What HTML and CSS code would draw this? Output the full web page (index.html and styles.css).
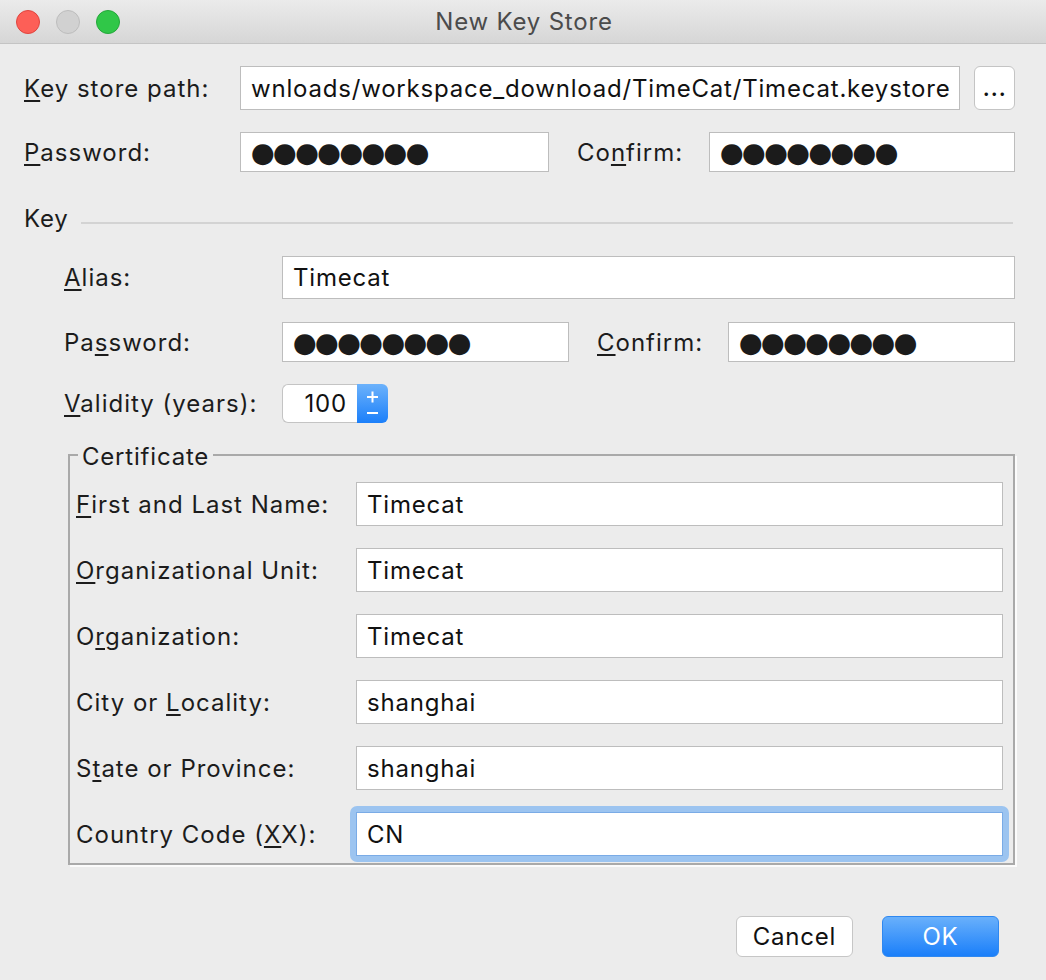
FILE: index.html
```html
<!DOCTYPE html>
<html lang="en">
<head>
<meta charset="utf-8">
<title>New Key Store</title>
<link rel="stylesheet" href="styles.css">
</head>
<body>
<div class="window">
  <header class="titlebar">
    <div class="lights">
      <span class="light red"></span>
      <span class="light gray"></span>
      <span class="light green"></span>
    </div>
    <div class="title">New Key Store</div>
    <div></div>
  </header>

  <main class="content">
    <div class="row row-path">
      <div class="lbl lbl-top"><u>K</u>ey store path:</div>
      <div class="field grow">wnloads/workspace_download/TimeCat/Timecat.keystore</div>
      <div class="browse">...</div>
    </div>

    <div class="row row-pass">
      <div class="lbl lbl-top"><u>P</u>assword:</div>
      <div class="field pass-top dots">●●●●●●●●</div>
      <div class="lbl confirm-top">Co<u>n</u>firm:</div>
      <div class="field grow dots">●●●●●●●●</div>
    </div>

    <div class="section-head">
      <span class="section-title">Key</span>
      <span class="rule"></span>
    </div>

    <div class="key">
      <div class="row row-alias">
        <div class="lbl lbl-key"><u>A</u>lias:</div>
        <div class="field grow">Timecat</div>
      </div>
      <div class="row row-kpass">
        <div class="lbl lbl-key">Pa<u>s</u>sword:</div>
        <div class="field pass-key dots">●●●●●●●●</div>
        <div class="lbl confirm-key"><u>C</u>onfirm:</div>
        <div class="field grow dots">●●●●●●●●</div>
      </div>
      <div class="row row-valid">
        <div class="lbl lbl-key"><u>V</u>alidity (years):</div>
        <div class="spinner">
          <div class="spin-field">100</div>
          <div class="spin-btn">
            <svg width="31" height="39" viewBox="0 0 31 39">
              <path d="M15.5 7.5v11M10 13h11" stroke="#fff" stroke-width="2" fill="none"/>
              <path d="M10 29h11" stroke="#fff" stroke-width="2" fill="none"/>
            </svg>
          </div>
        </div>
      </div>
    </div>

    <fieldset class="cert">
      <legend class="cert-legend">Certificate</legend>
      <div class="cert-grid">
        <div class="lbl"><u>F</u>irst and Last Name:</div>
        <div class="field">Timecat</div>
        <div class="lbl"><u>O</u>rganizational Unit:</div>
        <div class="field">Timecat</div>
        <div class="lbl">O<u>r</u>ganization:</div>
        <div class="field">Timecat</div>
        <div class="lbl">City or <u>L</u>ocality:</div>
        <div class="field">shanghai</div>
        <div class="lbl">S<u>t</u>ate or Province:</div>
        <div class="field">shanghai</div>
        <div class="lbl">Country Code (<u>X</u>X):</div>
        <div class="field focused">CN</div>
      </div>
    </fieldset>

    <div class="actions">
      <div class="btn">Cancel</div>
      <div class="btn primary">OK</div>
    </div>
  </main>
</div>
</body>
</html>
```

FILE: styles.css
```css
* { box-sizing: border-box; }

html, body {
  margin: 0;
  padding: 0;
}

body {
  width: 1046px;
  height: 980px;
  background: #ececec;
  font-family: Inter, "Liberation Sans", sans-serif;
  font-size: 24px;
  letter-spacing: 0.8px;
  color: #1c1c1c;
  overflow: hidden;
}

.window {
  width: 1046px;
  height: 980px;
  display: flex;
  flex-direction: column;
}

/* Title bar */
.titlebar {
  height: 44px;
  display: grid;
  grid-template-columns: 1fr auto 1fr;
  align-items: center;
  background: linear-gradient(#ebebeb, #d6d6d6);
  border-bottom: 1px solid #c4c4c4;
}

.lights {
  display: flex;
  gap: 16px;
  padding-left: 16px;
  padding-top: 1px;
}

.light {
  width: 24px;
  height: 24px;
  border-radius: 50%;
  display: block;
}

.light.red { background: #fd5f57; border: 1px solid #e0443e; }
.light.gray { background: #d1d1d1; border: 1px solid #bdbdbd; }
.light.green { background: #30c748; border: 1px solid #24a73a; }

.title {
  font-size: 24px;
  color: #4b4b4b;
  letter-spacing: 0.8px;
  padding-left: 2px;
}

/* Content */
.content {
  padding: 0 31px 0 24px;
  display: flex;
  flex-direction: column;
}

.row {
  display: flex;
  align-items: center;
}

.lbl {
  white-space: nowrap;
  letter-spacing: 1px;
}

u {
  text-decoration-thickness: 2px;
  text-underline-offset: 3px;
}

.field {
  background: #fff;
  border: 1px solid #bdbdbd;
  height: 100%;
  display: flex;
  align-items: center;
  padding: 0 10px;
  white-space: nowrap;
  overflow: hidden;
  color: #111;
}

.grow { flex: 1; }

.dots {
  font-family: "DejaVu Sans", sans-serif;
  font-size: 27.5px;
  letter-spacing: -1.9px;
  color: #1b1b1b;
  padding-left: 10px;
}

.row-path {
  margin-top: 22px;
  height: 44px;
}

.lbl-top { width: 216px; }

.browse {
  width: 41px;
  height: 44px;
  margin-left: 14px;
  background: #fff;
  border: 1px solid #c4c4c4;
  border-radius: 6px;
  display: flex;
  justify-content: center;
  align-items: center;
  padding-bottom: 4px;
  font-size: 26px;
  letter-spacing: 0.5px;
  color: #111;
}

.row-pass {
  margin-top: 22px;
  height: 40px;
}

.pass-top { width: 309px; }
.confirm-top { width: 132px; margin-left: 28px; }

/* Key section */
.section-head {
  margin-top: 32px;
  height: 28px;
  display: flex;
  align-items: center;
}

.section-title {
  width: 57px;
}

.rule {
  flex: 1;
  height: 2px;
  background: #d3d3d3;
  margin-top: 10px;
  margin-right: 2px;
}

.key {
  padding-left: 40px;
  display: flex;
  flex-direction: column;
}

.lbl-key { width: 218px; }

.row-alias {
  margin-top: 24px;
  height: 43px;
}

.row-kpass {
  margin-top: 23px;
  height: 40px;
}

.pass-key { width: 287px; }
.confirm-key { width: 131px; margin-left: 28px; }

.row-valid {
  margin-top: 22px;
  height: 39px;
}

.spinner {
  display: flex;
  height: 39px;
}

.spin-field {
  width: 75px;
  height: 39px;
  background: #fff;
  border: 1px solid #c4c4c4;
  border-right: none;
  border-radius: 6px 0 0 6px;
  display: flex;
  align-items: center;
  justify-content: flex-end;
  padding-right: 10px;
  color: #111;
}

.spin-btn {
  width: 31px;
  height: 39px;
  border-radius: 0 6px 6px 0;
  background: linear-gradient(#6cb2fb, #1b7ffa);
  display: block;
}

.spin-btn svg { display: block; }

/* Certificate */
.cert {
  margin: 18px 0 0 44px;
  padding: 13px 10px 7px 6px;
  border: 2px solid #a9a9a9;
  box-shadow: 2px 2px 0 #fbfbfb;
  min-width: 0;
}

.cert-legend {
  margin-left: 2px;
  padding: 0 4px;
  line-height: 28px;
  position: relative;
  top: 2px;
}

.cert-grid {
  display: grid;
  grid-template-columns: 280px 1fr;
  grid-auto-rows: 44px;
  row-gap: 22px;
  align-items: center;
  position: relative;
  z-index: 0;
}

.cert-grid .field {
  height: 44px;
}

.field.focused {
  position: relative;
  overflow: visible;
  border-color: #7aabe6;
}

.field.focused::before {
  content: "";
  position: absolute;
  inset: -7px;
  border-radius: 7px;
  background: #9cc4f0;
  z-index: -1;
}

/* Buttons */
.actions {
  margin-top: 51px;
  display: flex;
  justify-content: flex-end;
  gap: 29px;
  padding-right: 16px;
}

.btn {
  width: 117px;
  height: 41px;
  border-radius: 6px;
  display: flex;
  align-items: center;
  justify-content: center;
  background: #fff;
  border: 1px solid #c6c6c6;
  color: #111;
}

.btn.primary {
  background: linear-gradient(#69b0fb, #1a7ffa);
  border: 1px solid #2f88f0;
  color: #fff;
}
```
